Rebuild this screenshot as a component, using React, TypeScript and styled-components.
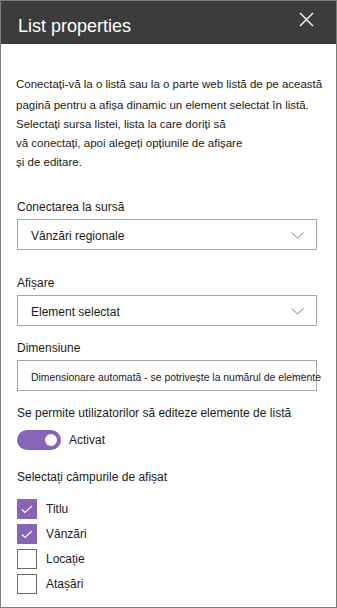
import * as React from 'react';
import styled, { createGlobalStyle } from 'styled-components';

const GlobalStyle = createGlobalStyle`
    html, body {
        margin: 0;
        padding: 0;
        background: #fff;
    }
    body {
        font-family: "Liberation Sans", Arial, sans-serif;
        color: #1b1b1b;
    }
`;

const Panel = styled.div`
    box-sizing: border-box;
    width: 337px;
    height: 608px;
    border: 1px solid #7c7c7c;
    display: flex;
    flex-direction: column;
    background: #fff;
`;

const Header = styled.header`
    height: 43px;
    background: #3c3c3c;
    display: flex;
    justify-content: space-between;
    align-items: flex-start;
    padding: 0 22px 0 17px;
    flex-shrink: 0;
`;

const Title = styled.h1`
    margin: 14px 0 0;
    font-size: 18px;
    line-height: 22px;
    font-weight: normal;
    color: #fff;
`;

const CloseButton = styled.button`
    margin-top: 11px;
    padding: 0;
    width: 15px;
    height: 15px;
    border: none;
    background: none;
    display: flex;
`;

const Body = styled.div`
    padding: 31px 19px 0 15px;
    display: flex;
    flex-direction: column;
`;

const Intro = styled.p`
    margin: 0;
    font-size: 11.5px;
    line-height: 19px;
`;

const IntroLine = styled.span<{ $extra?: number }>`
    display: block;
    white-space: nowrap;
    padding-bottom: ${({ $extra }) => $extra || 0}px;
`;

const Field = styled.div<{ $top: number }>`
    display: flex;
    flex-direction: column;
    margin-top: ${({ $top }) => $top}px;
    padding-left: 1px;
`;

const Label = styled.div`
    font-size: 12px;
    line-height: 19px;
    margin-bottom: 2px;
`;

const Dropdown = styled.div<{ $small?: boolean }>`
    position: relative;
    box-sizing: border-box;
    height: 31px;
    width: 300px;
    border: 1px solid #a6a6a6;
    display: flex;
    align-items: center;
    padding: 3px 0 0 13px;
    font-size: ${({ $small }) => ($small ? '10.4px' : '12px')};
    white-space: nowrap;
`;

const Chevron = styled.svg`
    position: absolute;
    right: 12px;
    top: 12px;
`;

const ToggleRow = styled.div`
    display: flex;
    align-items: center;
    gap: 8px;
    margin-top: 5px;
    font-size: 12px;
`;

const Track = styled.div<{ $on: boolean }>`
    width: 44px;
    height: 20px;
    border-radius: 10px;
    background: ${({ $on }) => ($on ? '#8764b8' : '#fff')};
    display: flex;
    align-items: center;
    justify-content: ${({ $on }) => ($on ? 'flex-end' : 'flex-start')};
    padding: 0 4px;
    box-sizing: border-box;
`;

const Knob = styled.div`
    width: 12px;
    height: 12px;
    border-radius: 50%;
    background: #fff;
`;

const CheckList = styled.div`
    display: flex;
    flex-direction: column;
    gap: 5px;
    margin-top: 10px;
`;

const CheckRow = styled.label`
    display: flex;
    align-items: center;
    gap: 9px;
    font-size: 12px;
    height: 20px;
`;

const Box = styled.span<{ $checked: boolean }>`
    box-sizing: border-box;
    width: 20px;
    height: 20px;
    display: flex;
    align-items: center;
    justify-content: center;
    background: ${({ $checked }) => ($checked ? '#8764b8' : '#fff')};
    border: 1px solid ${({ $checked }) => ($checked ? '#8764b8' : '#6b6b6b')};
`;

const ChevronIcon = () => (
    <Chevron width="13" height="7" viewBox="0 0 13 7">
        <path d="M0.5 0.5 L6.5 6 L12.5 0.5" fill="none" stroke="#7a7a7a" strokeWidth="1" />
    </Chevron>
);

const fields = [
    { key: 'Titlu', checked: true },
    { key: 'Vânzări', checked: true },
    { key: 'Locație', checked: false },
    { key: 'Atașări', checked: false },
];

export default function App() {
    return (
        <>
            <GlobalStyle />
            <Panel>
                <Header>
                    <Title>List properties</Title>
                    <CloseButton aria-label="Închide">
                        <svg width="15" height="15" viewBox="0 0 15 15">
                            <path d="M1 1 L14 14 M14 1 L1 14" stroke="#fff" strokeWidth="1.4" />
                        </svg>
                    </CloseButton>
                </Header>
                <Body>
                    <Intro>
                        <IntroLine $extra={2}>Conectați-vă la o listă sau la o parte web listă de pe această</IntroLine>
                        <IntroLine>pagină pentru a afișa dinamic un element selectat în listă.</IntroLine>
                        <IntroLine>Selectați sursa listei, lista la care doriți să</IntroLine>
                        <IntroLine>vă conectați, apoi alegeți opțiunile de afișare</IntroLine>
                        <IntroLine>și de editare.</IntroLine>
                    </Intro>

                    <Field $top={26}>
                        <Label>Conectarea la sursă</Label>
                        <Dropdown>
                            Vânzări regionale
                            <ChevronIcon />
                        </Dropdown>
                    </Field>

                    <Field $top={24}>
                        <Label>Afișare</Label>
                        <Dropdown>
                            Element selectat
                            <ChevronIcon />
                        </Dropdown>
                    </Field>

                    <Field $top={13}>
                        <Label>Dimensiune</Label>
                        <Dropdown $small>
                            Dimensionare automată - se potrivește la numărul de elemente
                            <ChevronIcon />
                        </Dropdown>
                    </Field>

                    <Field $top={13}>
                        <Label>Se permite utilizatorilor să editeze elemente de listă</Label>
                        <ToggleRow>
                            <Track $on>
                                <Knob />
                            </Track>
                            Activat
                        </ToggleRow>
                    </Field>

                    <Field $top={18}>
                        <Label>Selectați câmpurile de afișat</Label>
                        <CheckList>
                            {fields.map((f) => (
                                <CheckRow key={f.key}>
                                    <Box $checked={f.checked}>
                                        {f.checked && (
                                            <svg width="12" height="9" viewBox="0 0 12 9">
                                                <path d="M1 4.5 L4 7.5 L11 1" fill="none" stroke="#fff" strokeWidth="1.1" />
                                            </svg>
                                        )}
                                    </Box>
                                    {f.key}
                                </CheckRow>
                            ))}
                        </CheckList>
                    </Field>
                </Body>
            </Panel>
        </>
    );
}
